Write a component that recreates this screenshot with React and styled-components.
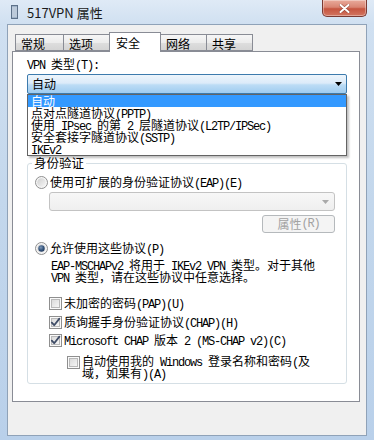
import React from 'react';
import styled, { createGlobalStyle } from 'styled-components';

const Global = createGlobalStyle`
  html, body { margin: 0; padding: 0; }
  body {
    width: 374px; height: 440px; overflow: hidden;
    background: #c4d8ed;
    font-family: "Noto Sans CJK SC", "Noto Sans", sans-serif;
    color: #000;
  }
`;

const Window = styled.div`
  width: 374px; height: 440px; box-sizing: border-box;
  display: flex; flex-direction: column;
  padding: 0 7px 4px 7px;
  background: linear-gradient(to bottom, #dfeaf6 0px, #d0e0f1 24px, #c3d7ec 200px, #b9d0ea 100%);
`;

const TitleBar = styled.div`
  height: 24px; display: flex; align-items: center;
`;

const AppIcon = styled.svg`
  margin-left: 4px; width: 7px; height: 14px; flex: none;
`;

const Title = styled.div`
  margin-left: 9px; font-size: 13px; line-height: 24px; padding-top: 2px; color: #1a1a1a;
`;

const CloseButton = styled.div`
  margin-left: auto; align-self: flex-start;
  width: 45px; height: 17px; box-sizing: border-box;
  border: 1px solid #7a3a33; border-top: none;
  border-radius: 0 0 5px 5px;
  background: linear-gradient(to bottom, #e9ab9c 0%, #d98573 45%, #c65540 55%, #d27560 100%);
  display: flex; align-items: center; justify-content: center;
  box-shadow: inset 0 0 0 1px rgba(255,255,255,0.35);
`;

const Client = styled.div`
  flex: 1; display: flex; flex-direction: column;
  background: #f0f0f0;
  border: 1px solid #8fa2b8;
  padding: 7px 6px 0 4px;
`;

const TabStrip = styled.div`
  display: flex; align-items: flex-end; height: 19px; padding-left: 3px;
  position: relative; z-index: 1;
`;

const Tab = styled.div`
  box-sizing: border-box;
  width: ${p => p.$w}px;
  height: ${p => (p.$active ? 20 : 17)}px;
  margin-left: -1px;
  margin-bottom: ${p => (p.$active ? -1 : 0)}px;
  border: 1px solid #898c95;
  border-bottom: ${p => (p.$active ? 'none' : '1px solid #898c95')};
  background: ${p => (p.$active ? '#ffffff' : 'linear-gradient(to bottom, #f6f6f6 0%, #ececec 50%, #dedede 51%, #d4d4d4 100%)')};
  font-size: 12px;
  line-height: 14px;
  padding: ${p => (p.$active ? '3px 0 0 6px' : '2px 0 0 5px')};
  color: #000;
  &:first-child { margin-left: 0; }
`;

const Panel = styled.div`
  box-sizing: border-box; height: 351px;
  background: #fff; border: 1px solid #898c95;
  padding: 5px 12px 0 14px;
  display: flex; flex-direction: column;
  font-size: 12px;
`;

const FieldLabel = styled.div`
  line-height: 14px; height: 14px;
`;

const ComboWrap = styled.div`
  position: relative; margin-top: 3px; width: 320px;
`;

const Combo = styled.div`
  box-sizing: border-box; height: 20px;
  border: 1px solid #3d7bad; border-radius: 2px;
  background: linear-gradient(to bottom, #edf5fc 0%, #dcebf9 45%, #bcdcf5 55%, #9fccf0 100%);
  display: flex; align-items: center; justify-content: space-between;
  padding: 0 4px 0 4px;
  line-height: 14px;
`;

const Arrow = styled.svg`
  width: 7px; height: 4px; flex: none;
`;

const DropList = styled.div`
  position: absolute; left: 0; right: 0; top: 100%;
  box-sizing: border-box;
  border: 1px solid #646464;
  background: #fff;
  box-shadow: 2px 2px 2px rgba(0,0,0,0.25);
  z-index: 5;
`;

const DropItem = styled.div`
  height: 12px; line-height: 12px; padding-left: 3px;
  white-space: nowrap;
  background: ${p => (p.$sel ? '#3399ff' : 'transparent')};
  color: ${p => (p.$sel ? '#fff' : '#000')};
`;

const Group = styled.fieldset`
  margin: 62px 0 0 0; padding: 0 0 4px 0; min-width: 0;
  width: 320px; box-sizing: border-box;
  border: 1px solid #d5dfe5; border-radius: 3px;
`;

const Legend = styled.legend`
  margin-left: 4px; padding: 0 2px;
  font-size: 12.5px; line-height: 14px;
`;

const GroupBody = styled.div`
  display: flex; flex-direction: column;
`;

const OptionRow = styled.div`
  display: flex; align-items: ${p => (p.$top ? 'flex-start' : 'center')};
  height: ${p => (p.$top ? 24 : 14)}px;
  margin-top: ${p => p.$mt}px;
  margin-left: ${p => p.$ml}px;
  gap: 2px;
  line-height: ${p => (p.$top ? 12 : 14)}px;
  white-space: nowrap;
`;

const BoxIcon = styled.svg`
  width: 13px; height: 13px; flex: none;
  margin-top: ${p => p.$mt || 0}px;
`;

const DisabledCombo = styled.div`
  box-sizing: border-box; height: 19px;
  margin: 3px 11px 0 21px;
  border: 1px solid #c3c3c3; border-radius: 3px;
  background: linear-gradient(to bottom, #f7f7f7, #efefef);
  display: flex; align-items: center; justify-content: flex-end;
  padding-right: 5px;
`;

const DisabledButton = styled.div`
  align-self: flex-end;
  box-sizing: border-box; width: 73px; height: 18px;
  margin: 4px 11px 0 0;
  border: 1px solid #b5b9bc; border-radius: 3px;
  background: #f4f4f4;
  color: #a2a2a2;
  display: flex; align-items: center; justify-content: center;
  line-height: 14px;
`;

const Desc = styled.div`
  margin: 4px 0 0 23px;
  height: 24px;
  line-height: 12px;
  white-space: nowrap;
`;

const Latin = styled.span`
  font-family: "Liberation Mono", "DejaVu Sans Mono", monospace;
  font-size: 12px;
  line-height: 8px;
  letter-spacing: -1.2px;
`;

function T({ children }) {
  const parts = String(children).split(/([\x20-\x7e]+)/);
  return (
    <>
      {parts.map((p, i) =>
        p === '' ? null : /^[\x20-\x7e]+$/.test(p) ? (
          <Latin key={i}>{p}</Latin>
        ) : (
          <React.Fragment key={i}>{p}</React.Fragment>
        )
      )}
    </>
  );
}

function Check({ checked, mt }) {
  return (
    <BoxIcon viewBox="0 0 13 13" $mt={mt}>
      <defs>
        <linearGradient id="cbg" x1="0" y1="0" x2="1" y2="1">
          <stop offset="0" stopColor="#d9d9d9" />
          <stop offset="1" stopColor="#f7f7f7" />
        </linearGradient>
      </defs>
      <rect x="0.5" y="0.5" width="12" height="12" fill="#fafafa" stroke="#8f8f8f" />
      <rect x="2.5" y="2.5" width="8" height="8" fill="url(#cbg)" stroke="#b9b9b9" />
      {checked && (
        <path d="M2.8 6.6 L5.2 9.2 L10.4 2.6" fill="none" stroke="#3f4c66" strokeWidth="1.8" strokeLinecap="round" strokeLinejoin="round" />
      )}
    </BoxIcon>
  );
}

function Radio({ checked }) {
  return (
    <BoxIcon viewBox="0 0 13 13">
      <defs>
        <linearGradient id="rbg" x1="0" y1="0" x2="1" y2="1">
          <stop offset="0" stopColor="#cfcfcf" />
          <stop offset="1" stopColor="#f6f6f6" />
        </linearGradient>
        <radialGradient id="rdot" cx="0.4" cy="0.35" r="0.7">
          <stop offset="0" stopColor="#7f98b8" />
          <stop offset="0.6" stopColor="#34547c" />
          <stop offset="1" stopColor="#22395a" />
        </radialGradient>
      </defs>
      <circle cx="6.5" cy="6.5" r="6" fill="#f5f5f5" stroke="#8f8f8f" />
      <circle cx="6.5" cy="6.5" r="4.3" fill="url(#rbg)" />
      {checked && <circle cx="6.5" cy="6.5" r="3.2" fill="url(#rdot)" />}
    </BoxIcon>
  );
}

const tabs = [
  { label: '常规', w: 49 },
  { label: '选项', w: 47 },
  { label: '安全', w: 52, active: true },
  { label: '网络', w: 47 },
  { label: '共享', w: 47 },
];

const items = [
  '自动',
  '点对点隧道协议(PPTP)',
  '使用 IPsec 的第 2 层隧道协议(L2TP/IPSec)',
  '安全套接字隧道协议(SSTP)',
  'IKEv2',
];

export default function App() {
  return (
    <>
      <Global />
      <Window>
        <TitleBar>
          <AppIcon viewBox="0 0 7 14">
            <rect x="0.5" y="0.5" width="6" height="13" fill="#9fb3c8" stroke="#5d7189" />
            <path d="M1 3h5M1 5h5M1 7h5M1 9h5M1 11h5" stroke="#e8eef5" strokeWidth="0.8" />
          </AppIcon>
          <Title>517VPN 属性</Title>
          <CloseButton>
            <svg width="11" height="9" viewBox="0 0 11 9">
              <path d="M1.5 1 L9.5 8 M9.5 1 L1.5 8" stroke="#6a2a22" strokeWidth="3.2" strokeLinecap="round" opacity="0.5" />
              <path d="M1.5 1 L9.5 8 M9.5 1 L1.5 8" stroke="#ffffff" strokeWidth="2" strokeLinecap="round" />
            </svg>
          </CloseButton>
        </TitleBar>
        <Client>
          <TabStrip>
            {tabs.map(t => (
              <Tab key={t.label} $w={t.w} $active={t.active}>{t.label}</Tab>
            ))}
          </TabStrip>
          <Panel>
            <FieldLabel><T>VPN 类型(T):</T></FieldLabel>
            <ComboWrap>
              <Combo>
                <span>自动</span>
                <Arrow viewBox="0 0 7 4"><path d="M0 0h7L3.5 4z" fill="#000" /></Arrow>
              </Combo>
              <DropList>
                {items.map((it, i) => (
                  <DropItem key={i} $sel={i === 0}><T>{it}</T></DropItem>
                ))}
              </DropList>
            </ComboWrap>
            <Group>
              <Legend>身份验证</Legend>
              <GroupBody>
                <OptionRow $mt={5} $ml={7}>
                  <Radio />
                  <span><T>使用可扩展的身份验证协议(EAP)(E)</T></span>
                </OptionRow>
                <DisabledCombo>
                  <Arrow viewBox="0 0 7 4"><path d="M0 0h7L3.5 4z" fill="#a9a9a9" /></Arrow>
                </DisabledCombo>
                <DisabledButton><T>属性(R)</T></DisabledButton>
                <OptionRow $mt={8} $ml={7}>
                  <Radio checked />
                  <span><T>允许使用这些协议(P)</T></span>
                </OptionRow>
                <Desc>
                  <T>EAP-MSCHAPv2 将用于 IKEv2 VPN 类型。对于其他</T><br />
                  <T>VPN 类型，请在这些协议中任意选择。</T>
                </Desc>
                <OptionRow $mt={13} $ml={21}>
                  <Check />
                  <span><T>未加密的密码(PAP)(U)</T></span>
                </OptionRow>
                <OptionRow $mt={5} $ml={21}>
                  <Check checked />
                  <span><T>质询握手身份验证协议(CHAP)(H)</T></span>
                </OptionRow>
                <OptionRow $mt={4} $ml={21}>
                  <Check checked />
                  <span><T>Microsoft CHAP 版本 2 (MS-CHAP v2)(C)</T></span>
                </OptionRow>
                <OptionRow $mt={8} $ml={39} $top>
                  <Check mt={1} />
                  <span>
                    <T>自动使用我的 Windows 登录名称和密码(及</T><br />
                    <T>域，如果有)(A)</T>
                  </span>
                </OptionRow>
              </GroupBody>
            </Group>
          </Panel>
        </Client>
      </Window>
    </>
  );
}
